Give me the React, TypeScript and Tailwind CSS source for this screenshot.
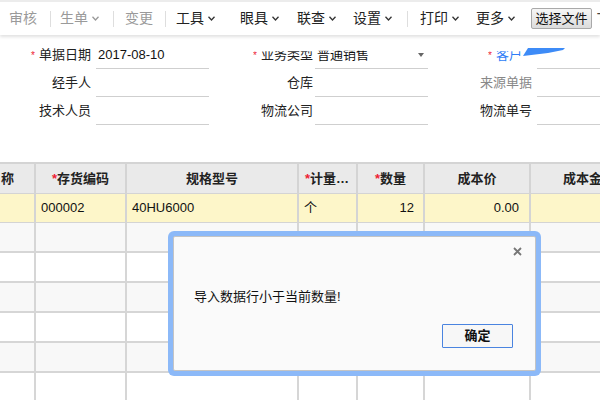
import React from 'react';

const font = "font-['Liberation_Sans','Noto_Sans_CJK_SC',sans-serif]";

function Chevron({ dark }: { dark?: boolean }) {
  return (
    <svg width="7" height="5" viewBox="0 0 7 5" className="ml-[4px] shrink-0">
      <polyline points="0.5,0.8 3.5,4 6.5,0.8" fill="none" stroke={dark ? '#333' : '#999'} strokeWidth="1.3" />
    </svg>
  );
}

function Sep({ ml }: { ml: string }) {
  return <div className={`${ml} h-[16px] w-px shrink-0 bg-[#dedede]`} />;
}

function Item({ ml, text, dark }: { ml: string; text: string; dark?: boolean }) {
  return <span className={`${ml} shrink-0 whitespace-nowrap ${dark ? 'text-[#222]' : 'text-[#9a9a9a]'}`}>{text}</span>;
}

function Toolbar() {
  return (
    <div className="relative z-10 flex h-[35px] items-center overflow-hidden border-t-2 border-[#ececec] bg-white text-[14px] shadow-[0_2px_3px_rgba(0,0,0,0.12)]">
      <Item ml="ml-[9px]" text="审核" />
      <Sep ml="ml-[13px]" />
      <Item ml="ml-[9px]" text="生单" />
      <Chevron />
      <Sep ml="ml-[14px]" />
      <Item ml="ml-[11px]" text="变更" />
      <Sep ml="ml-[12px]" />
      <Item ml="ml-[10px]" text="工具" dark />
      <Chevron dark />
      <Item ml="ml-[25px]" text="眼具" dark />
      <Chevron dark />
      <Item ml="ml-[18px]" text="联查" dark />
      <Chevron dark />
      <Item ml="ml-[17px]" text="设置" dark />
      <Chevron dark />
      <Sep ml="ml-[15px]" />
      <Item ml="ml-[12px]" text="打印" dark />
      <Chevron dark />
      <Item ml="ml-[17px]" text="更多" dark />
      <Chevron dark />
      <button className="ml-[16px] h-[21px] w-[61px] shrink-0 whitespace-nowrap rounded-[2px] border border-[#a9a9a9] bg-gradient-to-b from-[#f6f6f6] to-[#dcdcdc] text-[13px] leading-none text-[#111]">
        选择文件
      </button>
      <span className="ml-[5px] shrink-0 text-[#444]">T</span>
    </div>
  );
}

function Field({
  label,
  labelW,
  gap,
  inputW,
  value,
  star,
  labelClass = 'text-[#222]',
}: {
  label: string;
  labelW: string;
  gap: string;
  inputW: string;
  value?: string;
  star?: boolean;
  labelClass?: string;
}) {
  return (
    <div className="flex h-[28px]">
      <div className={`${labelW} flex items-center justify-end`}>
        {star && <span className="mr-[4px] text-[10px] text-[#e23]">*</span>}
        <span className={labelClass}>{label}</span>
      </div>
      <div className={`${gap} ${inputW} flex items-center border-b border-[#cfcfcf] pl-[2px]`}>
        {value && <span className="text-[13px] text-[#111]">{value}</span>}
      </div>
    </div>
  );
}

function Form() {
  return (
    <div className="mt-[6px] text-[13px]">
      <div className="flex">
        <Field label="单据日期" labelW="w-[91px]" gap="ml-[5px]" inputW="w-[113px]" value="2017-08-10" star />
        <div className="flex h-[28px]">
          <div className="flex w-[104px] items-center justify-end">
            <span className="mr-[4px] text-[10px] text-[#e23] [clip-path:inset(4px_0_0_0)]">*</span>
            <span className="text-[#222] [clip-path:inset(6px_0_0_0)]">业务类型</span>
          </div>
          <div className="ml-[2px] flex w-[113px] items-center justify-between border-b border-[#cfcfcf] pl-[2px] pr-[4px]">
            <span className="text-[#111] [clip-path:inset(6px_0_0_0)]">普通销售</span>
            <svg width="6" height="4" viewBox="0 0 6 4">
              <polygon points="0,0 6,0 3,4" fill="#666" />
            </svg>
          </div>
        </div>
        <div className="flex h-[28px]">
          <div className="relative flex w-[104px] items-center justify-end pr-[10px]">
            <span className="mr-[4px] text-[10px] text-[#e23] [clip-path:inset(4px_0_0_0)]">*</span>
            <span className="text-[#2f7df6] [clip-path:inset(6px_0_0_0)]">客户</span>
            <svg width="42" height="8" viewBox="0 0 42 8" className="absolute left-[95px] top-[7px]">
              <polygon points="5,0 42,0 40,2 25,5 0,8" fill="#3d8bf7" />
            </svg>
          </div>
          <div className="ml-[5px] w-[80px] border-b border-[#cfcfcf]" />
        </div>
      </div>
      <div className="flex">
        <Field label="经手人" labelW="w-[91px]" gap="ml-[5px]" inputW="w-[113px]" />
        <Field label="仓库" labelW="w-[104px]" gap="ml-[2px]" inputW="w-[113px]" />
        <Field label="来源单据" labelW="w-[104px]" gap="ml-[5px]" inputW="w-[80px]" labelClass="text-[#888]" />
      </div>
      <div className="flex">
        <Field label="技术人员" labelW="w-[91px]" gap="ml-[5px]" inputW="w-[113px]" />
        <Field label="物流公司" labelW="w-[104px]" gap="ml-[2px]" inputW="w-[113px]" />
        <Field label="物流单号" labelW="w-[104px]" gap="ml-[5px]" inputW="w-[80px]" />
      </div>
    </div>
  );
}

const cols = [
  { w: 'w-[35px]', head: '名称' },
  { w: 'w-[91px]', head: '存货编码', star: true },
  { w: 'w-[172px]', head: '规格型号' },
  { w: 'w-[59px]', head: '计量单位', star: true, left: true },
  { w: 'w-[67px]', head: '数量', star: true },
  { w: 'w-[106px]', head: '成本价' },
  { w: 'w-[118px]', head: '成本金额' },
];

function Table() {
  const empty = [0, 1, 2, 3, 4, 5];
  return (
    <div className="mt-[37px] overflow-hidden">
      <table className="w-[648px] table-fixed border-collapse text-[13px]">
        <colgroup>
          {cols.map((c) => (
            <col key={c.head} className={c.w} />
          ))}
        </colgroup>
        <thead>
          <tr className="h-[30px] bg-[#eaeaea]">
            {cols.map((c, i) => (
              <th key={c.head} className="border-t-2 border-r-2 border-b border-[#d4d4d4] p-0 font-bold text-[#222]">
                {i === 0 ? (
                  <div className="flex justify-end overflow-hidden whitespace-nowrap pr-[20px]">{c.head}</div>
                ) : c.left ? (
                  <div className="overflow-hidden text-ellipsis whitespace-nowrap pl-[6px] pr-[4px] text-left">
                    <span className="text-[#e23]">*</span>
                    {c.head}
                  </div>
                ) : (
                  <div className="whitespace-nowrap">
                    {c.star && <span className="text-[#e23]">*</span>}
                    {c.head}
                  </div>
                )}
              </th>
            ))}
          </tr>
        </thead>
        <tbody className="text-[#111]">
          <tr className="h-[29px] bg-[#fdf6c9]">
            <td className="border-r-2 border-b border-[#d4d4d4]" />
            <td className="border-r-2 border-b border-[#d4d4d4] pl-[5px]">000002</td>
            <td className="border-r-2 border-b border-[#d4d4d4] pl-[5px]">40HU6000</td>
            <td className="border-r-2 border-b border-[#d4d4d4] pl-[5px]">个</td>
            <td className="border-r-2 border-b border-[#d4d4d4] pr-[9px] text-right">12</td>
            <td className="border-r-2 border-b border-[#d4d4d4] pr-[10px] text-right">0.00</td>
            <td className="border-r-2 border-b border-[#d4d4d4]" />
          </tr>
          {empty.map((r) => (
            <tr key={r} className={`h-[30px] ${r % 2 === 0 ? 'bg-[#f8f8f8]' : 'bg-white'}`}>
              {cols.map((c) => (
                <td key={c.head} className="border-r-2 border-b-2 border-[#d6d6d6]" />
              ))}
            </tr>
          ))}
        </tbody>
      </table>
    </div>
  );
}

function Dialog() {
  return (
    <div className="absolute left-[168px] top-[231px] h-[145px] w-[373px] rounded-[6px] bg-[#8cb9f8] p-[5px]">
      <div className="relative h-full w-full rounded-[2px] border border-[#c4c4c4] bg-[#fafafa]">
        <svg width="9" height="9" viewBox="0 0 9 9" className="absolute right-[13px] top-[10px]">
          <path d="M1 1 L8 8 M8 1 L1 8" stroke="#777" strokeWidth="1.8" />
        </svg>
        <div className="absolute left-[20px] top-[50px] text-[13px] text-[#111]">导入数据行小于当前数量!</div>
        <button className="absolute left-[268px] top-[87px] h-[24px] w-[71px] rounded-[1px] border border-[#4a84e0] bg-[#f7f7f7] text-[13px] font-bold text-[#111]">
          确定
        </button>
      </div>
    </div>
  );
}

export default function App() {
  return (
    <div className={`relative h-[400px] w-[600px] overflow-hidden bg-white ${font}`}>
      <Toolbar />
      <Form />
      <Table />
      <Dialog />
    </div>
  );
}
